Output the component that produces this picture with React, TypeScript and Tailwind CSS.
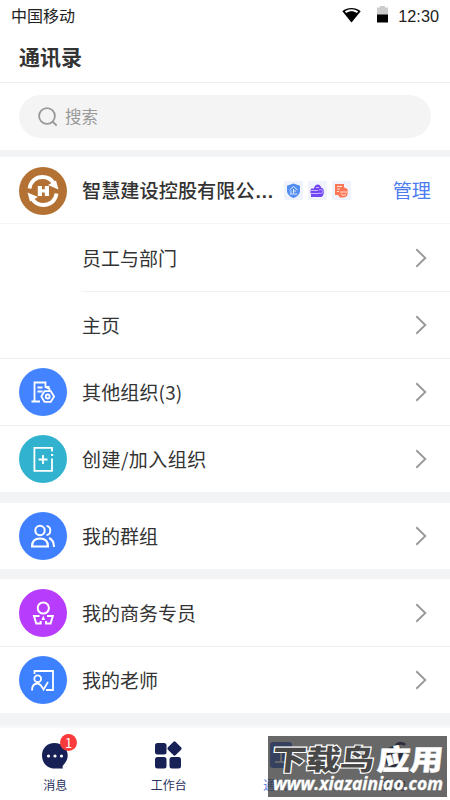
import React from 'react';

const Chevron = () => (
  <svg className="h-5 w-3 shrink-0" viewBox="0 0 12 20" fill="none" stroke="#999" strokeWidth="1.9">
    <path d="M1.300 1.300 10.300 10l-9 8.700" />
  </svg>
);

const Disc = ({ className, children }: { className: string; children: React.ReactNode }) => (
  <div className={`flex size-12 shrink-0 items-center justify-center rounded-full ${className}`}>
    <svg className="size-12" viewBox="0 0 48 48" fill="none" stroke="#fff" strokeWidth="1.8">
      {children}
    </svg>
  </div>
);

const Row = ({
  icon,
  label,
  line,
  height = 'h-[67px]',
  spacing = '',
}: {
  icon?: React.ReactNode;
  label: string;
  line?: string;
  height?: string;
  spacing?: string;
}) => (
  <div className={`relative flex shrink-0 items-center pr-[23px] pl-[19px] ${height}`}>
    <div className="mr-[15px] w-12 shrink-0">{icon}</div>
    <div className={`flex-1 text-[19px] leading-none text-[#333] ${spacing}`}>{label}</div>
    <Chevron />
    {line && <div className={`absolute right-0 -bottom-px h-px bg-[#f1f1f2] ${line}`} />}
  </div>
);

const Tag = ({ children }: { children: React.ReactNode }) => (
  <div className="size-[19px] rounded-[2px] bg-[#f0f3fc]">
    <svg className="size-[19px]" viewBox="0 0 19 19" fill="none">
      {children}
    </svg>
  </div>
);

const NavItem = ({ label, color, children }: { label: string; color: string; children: React.ReactNode }) => (
  <div className={`flex flex-1 flex-col items-center pt-[10px] ${color}`}>
    <svg className="h-[30px] w-[32px] overflow-visible" viewBox="0 0 32 30">
      {children}
    </svg>
    <div className="mt-[9px] text-[12px] leading-[14px]">{label}</div>
  </div>
);

export default function App() {
  return (
    <div className="relative flex h-[800px] w-[450px] flex-col overflow-hidden bg-white font-['Noto_Sans_CJK_SC',sans-serif]">
      <div className="flex h-8 shrink-0 items-center pr-[11px] pl-[11px] text-[16px] leading-none text-[#222]">
        <span className="-mt-[2px] flex-1">中国移动</span>
        <svg className="mt-[-3px] mr-[16px] h-[16px] w-[19px]" viewBox="0 0 19 16">
          <path d="M.3 4.2C5.8-.2 13.200-.2 18.700 4.200L9.500 15.600Z" fill="#000" />
          <path d="M2.900 4.300C7 1.500 12 1.500 16.100 4.300L14.900 5.900C11.500 3.700 7.500 3.700 4.100 5.900Z" fill="#fff" />
        </svg>
        <svg className="mt-[-3px] mr-[10px] h-[17px] w-[11px]" viewBox="0 0 11 17">
          <path d="M3 0h5v1.500h3V9H0V1.500h3z" fill="#ccc" />
          <path d="M0 8.500h11V16.500H0z" fill="#000" />
        </svg>
        <span className="font-['Liberation_Sans',sans-serif] text-[16.300px]">12:30</span>
      </div>
      <div className="flex h-[51px] shrink-0 items-center border-b border-[#efefef] pb-[2px] pl-[19px] text-[21px] leading-none font-bold text-[#333]">
        通讯录
      </div>
      <div className="h-[67px] shrink-0 px-[19px] pt-3">
        <div className="flex h-[43px] items-center rounded-full bg-[#f4f4f4] pl-[19px] text-[16.500px] leading-none text-[#999]">
          <svg className="mr-[7px] size-5" viewBox="0 0 20 20" fill="none" stroke="#999" strokeWidth="1.800">
            <circle cx="9" cy="9" r="7.900" />
            <path d="m14.500 14.500 4.200 4.200" />
          </svg>
          搜索
        </div>
      </div>
      <div className="h-[7px] shrink-0 bg-[#f2f3f5]" />
      <div className="relative flex h-[67px] shrink-0 items-center px-[19px]">
        <svg className="mr-[15px] size-12 shrink-0" viewBox="0 0 48 48">
          <circle cx="24" cy="24" r="24" fill="#b37233" />
          <path
            d="M10.500 21.500C11.500 14 17 10 23.500 10c5 0 9 2.300 11.500 6.500M37.500 26.500C36.500 34 31 38 24.500 38c-5 0-9-2.300-11.500-6.500"
            fill="none"
            stroke="#fff"
            strokeWidth="3.800"
          />
          <path d="M37 13.500 39.500 22.500 29 18ZM11 34.500 8.500 25.500 19 30Z" fill="#fff" />
          <path d="M18.800 19H23v3.200h2.800V19H30v10h-4.200v-3.500H23V29h-4.200Z" fill="#fff" />
        </svg>
        <div className="w-[192px] pt-px text-[19.200px] leading-none font-medium whitespace-nowrap text-[#333]">
          智慧建设控股有限公<span className="font-['Liberation_Sans',sans-serif] font-bold">…</span>
        </div>
        <div className="ml-[10px] flex gap-[5px]">
          <Tag>
            <path d="M9.500 2.500 16 4.700v5c0 3.300-2.600 5.800-6.500 7.300C5.600 15.500 3 13 3 9.700v-5Z" fill="#528df2" />
            <path d="m5.500 9 4-3.500 4 3.500M9.500 8v4.500M7 9.500v3M9.500 10h2.500M5.800 13h7.400" stroke="#fff" strokeWidth=".8" />
          </Tag>
          <Tag>
            <path d="M3 7.500h3C6.500 2.500 12.500 2.500 13 6.500c3 1 3.500 3.500 2.500 6.500-.5 2-1 3-3 3H3v-3.500h-.5V8.500H3Z" fill="#7145f4" />
            <path d="M3 9.500h7M3 12.500h8M8 6.500h3M11 9c2-1 4 0 4 1.500S13 13 11 12" stroke="#d2c4ff" strokeWidth=".9" />
          </Tag>
          <Tag>
            <path d="M3 3h9v3.500c3 .5 4 2 4 4.500l-1 4-3 1.500H8L6 14H3Z" fill="#ff7657" />
            <path d="M5 5.500h5M5 8h3M5 10.500h2M8 11h8M9 13c2 2 4 1.500 5 0" stroke="#fff0e9" strokeWidth=".9" />
          </Tag>
        </div>
        <div className="ml-auto text-[19.200px] leading-none text-[#4c7cf0]">管理</div>
        <div className="absolute right-0 bottom-0 left-0 h-px bg-[#f5f5f6]" />
      </div>
      <Row label="员工与部门" line="left-[81px]" />
      <Row label="主页" line="left-0" />
      <Row
        label="其他组织(3)"
        line="left-0"
        spacing="tracking-[.15px]"
        icon={
          <Disc className="bg-[#4483ff]">
            <path d="M12.500 33.500h8.500M15.500 33.500V14.500h11v4.500h4M26.500 14.500V19l4 2v2M18.500 19.500h5M18.500 23.500h5" />
            <path d="m25.500 23.200 6.300 0 3.300 5.300-3.300 5.300h-6.300l-3.200-5.300Z" />
            <circle cx="28.700" cy="28.500" r="2" />
          </Disc>
        }
      />
      <Row
        label="创建/加入组织"
        spacing="tracking-[.45px]"
        icon={
          <Disc className="bg-[#31b2ce]">
            <path d="M33 16.500v-3.700H15.400v23H33V23.500M19.500 24.500h9M24 20v9" />
            <path d="M32 20h2.200" strokeWidth="2" />
          </Disc>
        }
      />
      <div className="h-[11px] shrink-0 bg-[#f2f3f5]" />
      <Row
        label="我的群组"
        height="h-[66px]"
        spacing="-mt-px"
        icon={
          <Disc className="bg-[#4080ff]">
            <g strokeWidth="2">
              <circle cx="21" cy="18.500" r="4.700" />
              <path d="M13 34.500c0-5.500 3-8 8-8s8 2.500 8 8ZM27.500 14c5 0 5 9 0 9M30 26c3.500 1.500 5 4.500 5 9" />
            </g>
          </Disc>
        }
      />
      <div className="h-[10px] shrink-0 bg-[#f2f3f5]" />
      <Row
        label="我的商务专员"
        line="left-0"
        icon={
          <Disc className="bg-[#b83cfb]">
            <circle cx="24.300" cy="19" r="5.600" strokeWidth="2" />
            <path d="M20.500 27h-5.500l2.200 7.500h4.500v-2.500M28 27h5.800l-2.200 7.500h-4.600v-2.500" strokeWidth="2" />
            <path d="m24.300 26.500 1.800 4.500h-3.600Z" fill="#fff" stroke="none" />
          </Disc>
        }
      />
      <Row
        label="我的老师"
        icon={
          <Disc className="bg-[#3e81ff]">
            <path d="M15.500 18v-3H34v19H27" />
            <circle cx="18.700" cy="22.800" r="3.400" />
            <path d="M13 34.500c0-5 2-7 5.500-7 3 0 4 3 6 6l4.500-7.500" />
          </Disc>
        }
      />
      <div className="h-[11px] shrink-0 bg-[#f2f3f5]" />
      <div className="h-[4px] shrink-0 bg-linear-to-b from-[#f4f5f6] to-[#fafafa]" />
      <div className="flex flex-1 bg-white pt-px">
        <div className="relative flex flex-1 -translate-x-[1px]">
          <NavItem label="消息" color="text-[#28305d]">
            <path d="M15.500 4C7.800 4 3 9.500 3 16.500S8 29.500 15.500 29.500h8.500c-.9-1.800-.3-3 1-4.300 2-2.300 3.700-5 3.700-8.700C28.700 9.500 23 4 15.500 4Z" fill="#172155" />
            <circle cx="9.500" cy="17" r="1.600" fill="#fff" />
            <circle cx="16" cy="17" r="1.600" fill="#fff" />
            <circle cx="22.500" cy="17" r="1.600" fill="#fff" />
          </NavItem>
          <div className="absolute top-[5px] left-[61px] flex size-[17px] items-center justify-center rounded-full bg-[#fb3b3b] text-[13px] leading-none text-white">
            1
          </div>
        </div>
        <NavItem label="工作台" color="text-[#28305d]">
          <g fill="#172155">
            <rect x="2" y="4" width="11.500" height="11.500" rx="2.500" />
            <rect x="2" y="18" width="11.500" height="11.500" rx="2.500" />
            <rect x="16.500" y="18" width="11.500" height="11.500" rx="2.500" />
            <rect x="16" y="4" width="11" height="11" rx="1.700" transform="rotate(45 21.500 9.500)" />
          </g>
        </NavItem>
        <NavItem label="通讯录" color="text-[#4c74df]">
          <rect x="5" y="3" width="22" height="26" rx="3" fill="#3d69dd" />
          <path d="M10 11h12M16 11v12M10 23h12" stroke="#fff" strokeWidth="2" />
        </NavItem>
        <NavItem label="我的" color="text-[#28305d]">
          <circle cx="17" cy="18" r="11" fill="#172155" />
          <path d="m12 23 3-8 7-3-3 8Z" fill="#fff" />
          <path d="M17 8c4-6 9-3 10-2" stroke="#172155" strokeWidth="3" fill="none" />
        </NavItem>
      </div>
      <div className="absolute top-[736px] left-[268px] h-[61px] w-[179px] bg-[#333]/74">
        <svg className="h-full w-full" viewBox="0 0 179 61">
          <g fontFamily="'Noto Sans CJK SC', sans-serif" fontSize="28.500" fontWeight="900" transform="skewX(-6)">
            <text x="7" y="34.500" textLength="102" lengthAdjust="spacingAndGlyphs" fill="#484848" stroke="#fff" strokeWidth="2.200" paintOrder="stroke">下载鸟</text>
            <text x="112" y="34.500" textLength="66" lengthAdjust="spacingAndGlyphs" fill="#fff" stroke="#fff" strokeWidth=".4">应用</text>
          </g>
          <text x="5" y="54" textLength="170" lengthAdjust="spacingAndGlyphs" fontFamily="'Open Sans', sans-serif" fontWeight="700" fontStyle="italic" fontSize="17" fill="#fff" stroke="#fff" strokeWidth=".3">www.xiazainiao.com</text>
        </svg>
      </div>
    </div>
  );
}
